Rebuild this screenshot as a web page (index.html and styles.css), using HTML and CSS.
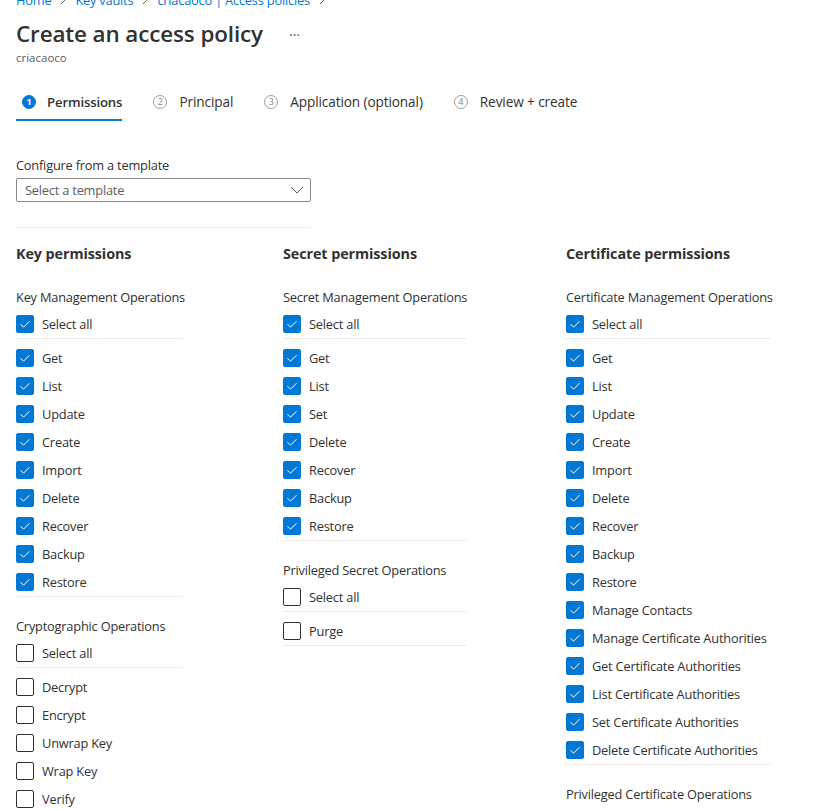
FILE: index.html
```html
<!DOCTYPE html>
<html>
<head>
<meta charset="utf-8">
<link rel="stylesheet" href="styles.css">
</head>
<body>
<div class="page">
  <nav class="crumbs">
    <a class="crumb">Home</a>
    <svg class="crumb-sep" width="8" height="10" viewBox="0 0 8 10"><path d="M2 1l4 4-4 4" fill="none" stroke="#605e5c" stroke-width="1"/></svg>
    <a class="crumb">Key vaults</a>
    <svg class="crumb-sep" width="8" height="10" viewBox="0 0 8 10"><path d="M2 1l4 4-4 4" fill="none" stroke="#605e5c" stroke-width="1"/></svg>
    <a class="crumb">criacaoco | Access policies</a>
    <svg class="crumb-sep" width="8" height="10" viewBox="0 0 8 10"><path d="M2 1l4 4-4 4" fill="none" stroke="#605e5c" stroke-width="1"/></svg>
  </nav>

  <div class="title-row">
    <h1 class="title">Create an access policy</h1>
    <span class="more">···</span>
  </div>
  <div class="subtitle">criacaoco</div>

  <div class="tabs">
    <div class="tab active"><span class="step">1</span><span class="tab-label">Permissions</span></div>
    <div class="tab"><span class="step">2</span><span class="tab-label">Principal</span></div>
    <div class="tab"><span class="step">3</span><span class="tab-label">Application (optional)</span></div>
    <div class="tab"><span class="step">4</span><span class="tab-label">Review + create</span></div>
  </div>

  <div class="template">
    <label class="field-label">Configure from a template</label>
    <div class="dropdown">
      <span class="placeholder">Select a template</span>
      <svg class="chev" width="14" height="8" viewBox="0 0 14 8"><path d="M1 1l6 6 6-6" fill="none" stroke="#605e5c" stroke-width="1"/></svg>
    </div>
    <div class="divider"></div>
  </div>

  <div class="columns">
    <div class="column">
      <h2 class="col-title">Key permissions</h2>
      <div class="group">
        <div class="group-label">Key Management Operations</div>
        <div class="row"><span class="cb on"></span>Select all</div>
        <div class="sep first"></div>
        <div class="row"><span class="cb on"></span>Get</div>
        <div class="row"><span class="cb on"></span>List</div>
        <div class="row"><span class="cb on"></span>Update</div>
        <div class="row"><span class="cb on"></span>Create</div>
        <div class="row"><span class="cb on"></span>Import</div>
        <div class="row"><span class="cb on"></span>Delete</div>
        <div class="row"><span class="cb on"></span>Recover</div>
        <div class="row"><span class="cb on"></span>Backup</div>
        <div class="row"><span class="cb on"></span>Restore</div>
        <div class="sep"></div>
      </div>
      <div class="group">
        <div class="group-label">Cryptographic Operations</div>
        <div class="row"><span class="cb"></span>Select all</div>
        <div class="sep first"></div>
        <div class="row"><span class="cb"></span>Decrypt</div>
        <div class="row"><span class="cb"></span>Encrypt</div>
        <div class="row"><span class="cb"></span>Unwrap Key</div>
        <div class="row"><span class="cb"></span>Wrap Key</div>
        <div class="row"><span class="cb"></span>Verify</div>
        <div class="row"><span class="cb"></span>Sign</div>
      </div>
    </div>

    <div class="column">
      <h2 class="col-title">Secret permissions</h2>
      <div class="group">
        <div class="group-label">Secret Management Operations</div>
        <div class="row"><span class="cb on"></span>Select all</div>
        <div class="sep first"></div>
        <div class="row"><span class="cb on"></span>Get</div>
        <div class="row"><span class="cb on"></span>List</div>
        <div class="row"><span class="cb on"></span>Set</div>
        <div class="row"><span class="cb on"></span>Delete</div>
        <div class="row"><span class="cb on"></span>Recover</div>
        <div class="row"><span class="cb on"></span>Backup</div>
        <div class="row"><span class="cb on"></span>Restore</div>
        <div class="sep"></div>
      </div>
      <div class="group">
        <div class="group-label">Privileged Secret Operations</div>
        <div class="row"><span class="cb"></span>Select all</div>
        <div class="sep first"></div>
        <div class="row"><span class="cb"></span>Purge</div>
        <div class="sep"></div>
      </div>
    </div>

    <div class="column">
      <h2 class="col-title">Certificate permissions</h2>
      <div class="group">
        <div class="group-label">Certificate Management Operations</div>
        <div class="row"><span class="cb on"></span>Select all</div>
        <div class="sep first"></div>
        <div class="row"><span class="cb on"></span>Get</div>
        <div class="row"><span class="cb on"></span>List</div>
        <div class="row"><span class="cb on"></span>Update</div>
        <div class="row"><span class="cb on"></span>Create</div>
        <div class="row"><span class="cb on"></span>Import</div>
        <div class="row"><span class="cb on"></span>Delete</div>
        <div class="row"><span class="cb on"></span>Recover</div>
        <div class="row"><span class="cb on"></span>Backup</div>
        <div class="row"><span class="cb on"></span>Restore</div>
        <div class="row"><span class="cb on"></span>Manage Contacts</div>
        <div class="row"><span class="cb on"></span>Manage Certificate Authorities</div>
        <div class="row"><span class="cb on"></span>Get Certificate Authorities</div>
        <div class="row"><span class="cb on"></span>List Certificate Authorities</div>
        <div class="row"><span class="cb on"></span>Set Certificate Authorities</div>
        <div class="row"><span class="cb on"></span>Delete Certificate Authorities</div>
        <div class="sep"></div>
      </div>
      <div class="group">
        <div class="group-label">Privileged Certificate Operations</div>
        <div class="row"><span class="cb"></span>Select all</div>
      </div>
    </div>
  </div>
</div>
</body>
</html>
```

FILE: styles.css
```css
html, body {
  margin: 0;
  padding: 0;
  background: #ffffff;
  overflow: hidden;
}

body {
  font-family: "Open Sans", "Noto Sans", sans-serif;
  font-size: 12.8px;
  letter-spacing: -0.2px;
  color: #323130;
}

.page {
  padding-left: 16px;
  height: 811px;
  overflow: hidden;
}

.crumbs {
  display: flex;
  align-items: center;
  gap: 8px;
  height: 20px;
  margin-top: -10px;
}

.crumb {
  color: #0078d4;
  white-space: nowrap;
}

.crumb-sep {
  display: block;
}

.title-row {
  display: flex;
  align-items: center;
  gap: 26px;
  height: 32px;
  margin-top: 8px;
}

.title {
  margin: 0;
  font-size: 22.4px;
  font-weight: 600;
  line-height: 32px;
  letter-spacing: -0.1px;
  white-space: nowrap;
}

.more {
  color: #605e5c;
  font-size: 14px;
  letter-spacing: 0;
}

.subtitle {
  font-size: 11.5px;
  line-height: 16px;
  letter-spacing: 0;
  color: #605e5c;
}

.tabs {
  display: flex;
  gap: 25px;
  margin-top: 18px;
}

.tab {
  display: flex;
  align-items: center;
  gap: 12px;
  height: 35px;
  padding-left: 6px;
  border-bottom: 2px solid transparent;
  font-size: 13.6px;
  letter-spacing: -0.1px;
  white-space: nowrap;
}

.tab.active {
  gap: 11px;
  border-bottom-color: #0078d4;
  font-size: 13.2px;
  letter-spacing: -0.15px;
  font-weight: 600;
}

.step {
  display: flex;
  align-items: center;
  justify-content: center;
  width: 12px;
  height: 12px;
  border: 1px solid #a19f9d;
  border-radius: 50%;
  font-size: 9px;
  font-weight: 400;
  letter-spacing: 0;
  color: #8a8886;
  line-height: 1;
}

.tab.active .step {
  background: #0078d4;
  border-color: #0078d4;
  color: #ffffff;
  font-weight: 700;
}

.template {
  width: 295px;
  margin-top: 34px;
}

.field-label {
  display: block;
  line-height: 20px;
}

.dropdown {
  display: flex;
  align-items: center;
  justify-content: space-between;
  box-sizing: border-box;
  height: 24px;
  margin-top: 3px;
  padding: 0 6px 0 8px;
  border: 1px solid #8a8886;
  border-radius: 2px;
}

.placeholder {
  color: #605e5c;
}

.chev {
  display: block;
}

.divider {
  height: 1px;
  margin-top: 25px;
  background: #edebe9;
}

.columns {
  display: grid;
  grid-template-columns: 167px 183px 205px;
  column-gap: 100px;
  align-items: start;
  margin-top: 14px;
}

.col-title {
  margin: 1px 0 22px;
  font-size: 14.4px;
  font-weight: 700;
  line-height: 22px;
  letter-spacing: -0.1px;
  white-space: nowrap;
}

.group {
  margin-bottom: 19px;
}

.group-label {
  line-height: 20px;
  margin-bottom: 3px;
  white-space: nowrap;
}

.row {
  display: flex;
  align-items: center;
  gap: 8px;
  height: 28px;
  white-space: nowrap;
}

.cb {
  flex: none;
  box-sizing: border-box;
  width: 18px;
  height: 18px;
  border: 1px solid #323130;
  border-radius: 2px;
}

.cb.on {
  border-color: #0078d4;
  background-color: #0078d4;
  background-image: url("data:image/svg+xml,%3Csvg xmlns='http://www.w3.org/2000/svg' width='18' height='18' viewBox='0 0 18 18'%3E%3Cpath d='M4.5 9.2l3 3 6-6' fill='none' stroke='white' stroke-width='1'/%3E%3C/svg%3E");
  background-position: center;
  background-repeat: no-repeat;
}

.sep {
  height: 1px;
  background: #edebe9;
}

.sep.first {
  margin-bottom: 5px;
}
```
